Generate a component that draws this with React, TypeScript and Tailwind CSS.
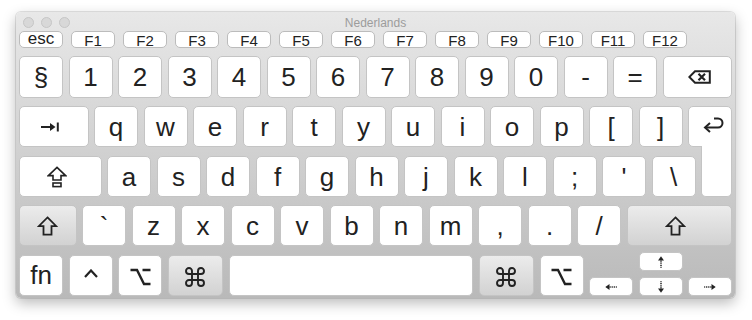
import React from "react"

const ink = "#222"

function cx(...parts: (string | false | undefined)[]) {
  return parts.filter(Boolean).join(" ")
}

function Key({
  className,
  mod,
  children,
}: {
  className?: string
  mod?: boolean
  children?: React.ReactNode
}) {
  return (
    <div
      className={cx(
        "flex shrink-0 items-center justify-center rounded-[5px] border border-[#c4c4c4] text-[26px] leading-none text-[#222]",
        mod ? "bg-linear-to-b from-[#ececec] to-[#d2d2d2]" : "bg-white",
        className,
      )}
    >
      {children}
    </div>
  )
}

function FKey({ label, esc }: { label: string; esc?: boolean }) {
  return (
    <div
      className={cx(
        "flex h-[17px] w-[44px] items-center justify-center rounded-[5px] border border-[#bcbcbc] bg-white leading-none text-[#222]",
        esc ? "text-[17px]" : "text-[15px]",
      )}
    >
      <span className={esc ? "-mt-[3px]" : "mt-[2px]"}>{label}</span>
    </div>
  )
}

const DeleteIcon = () => (
  <svg width="23" height="14" viewBox="0 0 23 14" className="ml-[4px]">
    <path d="M7 1.2 H21.8 V12.8 H7 L1.3 7 Z" fill="none" stroke={ink} strokeWidth="2" />
    <path d="M10.5 3.8 L17 10.2 M17 3.8 L10.5 10.2" stroke={ink} strokeWidth="2.2" />
  </svg>
)

const TabIcon = () => (
  <svg width="19" height="10" viewBox="0 0 19 10" className="-ml-[6px]">
    <path d="M0 5 H11" stroke={ink} strokeWidth="2" />
    <path d="M9 1 L14.5 5 L9 9 Z" fill={ink} />
    <path d="M16.8 0.5 V9.5" stroke={ink} strokeWidth="2" />
  </svg>
)

const CapsIcon = () => (
  <svg width="20" height="22" viewBox="0 0 20 22" className="-ml-[7px]">
    <path
      d="M10 1.3 L18.6 9.6 H14 V14 H6 V9.6 H1.4 Z"
      fill="none"
      stroke={ink}
      strokeWidth="1.6"
    />
    <rect x="6" y="17" width="8" height="3.6" fill="none" stroke={ink} strokeWidth="1.6" />
  </svg>
)

const ShiftIcon = () => (
  <svg width="21" height="20" viewBox="0 0 21 20">
    <path
      d="M10.5 1.4 L19.3 10.2 H14.5 V18.6 H6.5 V10.2 H1.7 Z"
      fill="none"
      stroke={ink}
      strokeWidth="1.8"
    />
  </svg>
)

const ReturnIcon = () => (
  <svg width="21" height="16" viewBox="0 0 21 16" className="ml-[6px] -mt-[4px]">
    <path d="M11 1.5 H15 A4.5 4.5 0 0 1 15 10.5 H3" fill="none" stroke={ink} strokeWidth="2" />
    <path d="M7 6 L2 10.5 L7 15" fill="none" stroke={ink} strokeWidth="2" />
  </svg>
)

const CmdIcon = () => (
  <svg width="20" height="20" viewBox="0 0 20 20" className="mt-[3px]">
    <path
      d="M7 7 V4 A3 3 0 1 0 4 7 H16 A3 3 0 1 0 13 4 V16 A3 3 0 1 0 16 13 H4 A3 3 0 1 0 7 16 Z"
      fill="none"
      stroke={ink}
      strokeWidth="1.9"
    />
  </svg>
)

const OptIcon = () => (
  <svg width="21" height="18" viewBox="0 0 21 18" className="mt-[2px]">
    <path d="M0.5 2 H7 L14 16 H20.5 M12.5 2 H20.5" fill="none" stroke={ink} strokeWidth="2.4" />
  </svg>
)

const CtrlIcon = () => (
  <svg width="14" height="9" viewBox="0 0 14 9" className="-mt-[4px]">
    <path d="M1 8 L7 1.5 L13 8" fill="none" stroke={ink} strokeWidth="2.2" />
  </svg>
)

function Arrow({ dir }: { dir: "up" | "down" | "left" | "right" }) {
  const rot = { up: 0, right: 90, down: 180, left: 270 }[dir]
  return (
    <svg width="12" height="12" viewBox="0 0 12 12">
      <g transform={`rotate(${rot} 6 6)`}>
        <path d="M6 0.3 L9 4.5 H3 Z" fill={ink} />
        <path d="M6 4.5 V11.8" stroke={ink} strokeWidth="1.5" strokeDasharray="1.2 0.9" />
      </g>
    </svg>
  )
}

const numberRow = ["§", "1", "2", "3", "4", "5", "6", "7", "8", "9", "0", "-", "="]
const topRow = ["q", "w", "e", "r", "t", "y", "u", "i", "o", "p", "[", "]"]
const homeRow = ["a", "s", "d", "f", "g", "h", "j", "k", "l", ";", "'", "\\"]
const bottomRow = ["`", "z", "x", "c", "v", "b", "n", "m", ",", ".", "/"]
const fKeys = ["F1", "F2", "F3", "F4", "F5", "F6", "F7", "F8", "F9", "F10", "F11", "F12"]

export default function App() {
  return (
    <div className="h-[320px] w-[752px] bg-white pl-[16px] pt-[12px] font-['Liberation_Sans',Arial,sans-serif]">
      <div className="flex h-[286px] w-[719px] flex-col rounded-[5px] bg-linear-to-b from-[#e8e8e8] to-[#b9b9b9] shadow-[0_0_0_1px_rgba(0,0,0,0.1),0_5px_14px_rgba(0,0,0,0.28)]">
        {/* title bar */}
        <div className="grid h-[19px] shrink-0 grid-cols-[1fr_auto_1fr] items-center">
          <div className="flex gap-[7px] pl-[7px] pt-[1px]">
            <span className="size-[11px] rounded-full border border-[#c6c6c6] bg-[#d8d8d8]" />
            <span className="size-[11px] rounded-full border border-[#c6c6c6] bg-[#d8d8d8]" />
            <span className="size-[11px] rounded-full border border-[#c6c6c6] bg-[#d8d8d8]" />
          </div>
          <span className="pt-[2px] text-[12px] text-[#9c9c9c]">Nederlands</span>
          <div />
        </div>

        <div className="flex flex-col px-[3px] pb-[2px]">
          {/* function row */}
          <div className="flex h-[17px] gap-[8px]">
            <FKey label="esc" esc />
            {fKeys.map((f) => (
              <FKey key={f} label={f} />
            ))}
          </div>

          {/* numbers */}
          <div className="mt-[8px] flex h-[42px] gap-[5.5px]">
            {numberRow.map((k) => (
              <Key key={k} className="w-[44px]">
                {k}
              </Key>
            ))}
            <Key className="flex-1">
              <DeleteIcon />
            </Key>
          </div>

          {/* qwerty */}
          <div className="mt-[8px] flex h-[41px] gap-[5.5px]">
            <Key className="flex-1">
              <TabIcon />
            </Key>
            {topRow.map((k) => (
              <Key key={k} className="w-[44px]">
                {k}
              </Key>
            ))}
            <Key className="w-[44px] rounded-br-none">
              <ReturnIcon />
            </Key>
          </div>

          {/* home row, with the foot of the return key */}
          <div className="mt-[9px] flex h-[41px] gap-[5.5px]">
            <Key className="flex-1">
              <CapsIcon />
            </Key>
            {homeRow.map((k) => (
              <Key key={k} className="w-[44px]">
                {k}
              </Key>
            ))}
            <div className="-mt-[10px] h-[51px] w-[31px] shrink-0 self-start rounded-b-[5px] border-x border-b border-[#c4c4c4] bg-white" />
          </div>

          {/* shift row */}
          <div className="mt-[8px] flex h-[41px] gap-[5.5px]">
            <Key mod className="w-[57.5px]">
              <ShiftIcon />
            </Key>
            {bottomRow.map((k) => (
              <Key key={k} className="w-[44px]">
                {k}
              </Key>
            ))}
            <Key mod className="flex-1">
              <span className="-ml-[8px] flex">
                <ShiftIcon />
              </span>
            </Key>
          </div>

          {/* modifiers + arrows */}
          <div className="mt-[6px] flex h-[44px] items-end gap-[5.5px]">
            <Key className="h-[41px] w-[44px] text-[25px]">
              <span className="-mt-[2px]">fn</span>
            </Key>
            <Key className="h-[41px] w-[44px]">
              <CtrlIcon />
            </Key>
            <Key className="h-[41px] w-[44px]">
              <OptIcon />
            </Key>
            <Key mod className="h-[41px] w-[55.5px]">
              <CmdIcon />
            </Key>
            <Key className="h-[41px] flex-1" />
            <Key mod className="h-[41px] w-[55.5px]">
              <CmdIcon />
            </Key>
            <Key className="h-[41px] w-[44px]">
              <OptIcon />
            </Key>
            <Key className="h-[19px] w-[44px]">
              <Arrow dir="left" />
            </Key>
            <div className="flex w-[44px] shrink-0 flex-col gap-[6px]">
              <Key className="h-[19px] w-[44px]">
                <Arrow dir="up" />
              </Key>
              <Key className="h-[19px] w-[44px]">
                <Arrow dir="down" />
              </Key>
            </div>
            <Key className="h-[19px] w-[44px]">
              <Arrow dir="right" />
            </Key>
          </div>
        </div>
      </div>
    </div>
  )
}
